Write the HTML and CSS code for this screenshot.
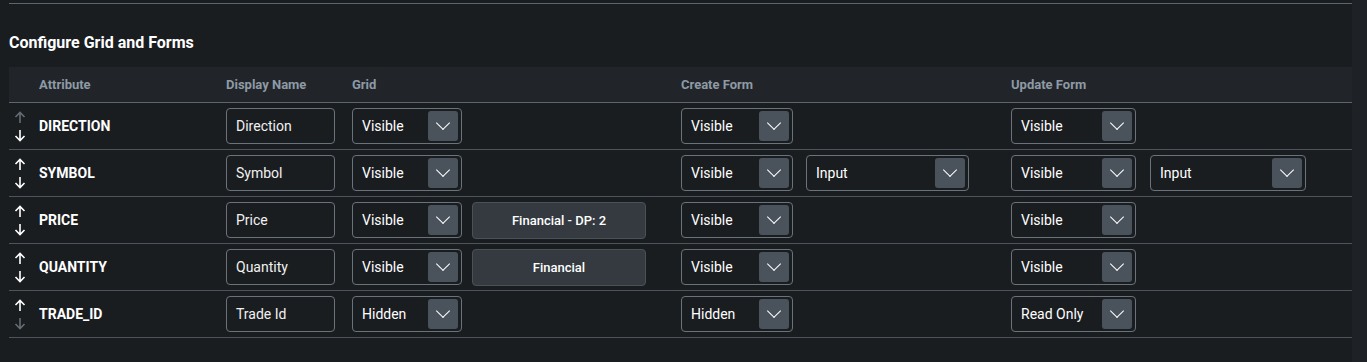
FILE: index.html
```html
<!DOCTYPE html>
<html>
<head>
    <meta charset="UTF-8">
    <title>Configure Grid and Forms</title>
    <link rel="stylesheet" href="styles.css">
</head>
<body>
<div class="page">
    <div class="content">
        <hr class="top-rule">
        <h3 class="title">Configure Grid and Forms</h3>

        <div class="table">
            <div class="row head">
                <div></div>
                <div>Attribute</div>
                <div>Display Name</div>
                <div>Grid</div>
                <div>Create Form</div>
                <div>Update Form</div>
            </div>

            <div class="row">
                <div class="move">
                    <svg class="arrow off" viewBox="0 0 12 13"><path d="M6 12V1.5M1.5 6L6 1.5 10.5 6"/></svg>
                    <svg class="arrow" viewBox="0 0 12 13"><path d="M6 1v10.5M1.5 7L6 11.5 10.5 7"/></svg>
                </div>
                <div class="attr">DIRECTION</div>
                <div><div class="text-input">Direction</div></div>
                <div class="cell"><div class="select w-grid"><span>Visible</span><i class="caret"></i></div></div>
                <div class="cell"><div class="select w-create"><span>Visible</span><i class="caret"></i></div></div>
                <div class="cell"><div class="select w-update"><span>Visible</span><i class="caret"></i></div></div>
            </div>

            <div class="row">
                <div class="move">
                    <svg class="arrow" viewBox="0 0 12 13"><path d="M6 12V1.5M1.5 6L6 1.5 10.5 6"/></svg>
                    <svg class="arrow" viewBox="0 0 12 13"><path d="M6 1v10.5M1.5 7L6 11.5 10.5 7"/></svg>
                </div>
                <div class="attr">SYMBOL</div>
                <div><div class="text-input">Symbol</div></div>
                <div class="cell"><div class="select w-grid"><span>Visible</span><i class="caret"></i></div></div>
                <div class="cell gap-create">
                    <div class="select w-create"><span>Visible</span><i class="caret"></i></div>
                    <div class="select w-type"><span>Input</span><i class="caret"></i></div>
                </div>
                <div class="cell gap-update">
                    <div class="select w-update"><span>Visible</span><i class="caret"></i></div>
                    <div class="select w-type2"><span>Input</span><i class="caret"></i></div>
                </div>
            </div>

            <div class="row">
                <div class="move">
                    <svg class="arrow" viewBox="0 0 12 13"><path d="M6 12V1.5M1.5 6L6 1.5 10.5 6"/></svg>
                    <svg class="arrow" viewBox="0 0 12 13"><path d="M6 1v10.5M1.5 7L6 11.5 10.5 7"/></svg>
                </div>
                <div class="attr">PRICE</div>
                <div><div class="text-input">Price</div></div>
                <div class="cell gap-grid">
                    <div class="select w-grid"><span>Visible</span><i class="caret"></i></div>
                    <button class="format">Financial - DP: 2</button>
                </div>
                <div class="cell"><div class="select w-create"><span>Visible</span><i class="caret"></i></div></div>
                <div class="cell"><div class="select w-update"><span>Visible</span><i class="caret"></i></div></div>
            </div>

            <div class="row">
                <div class="move">
                    <svg class="arrow" viewBox="0 0 12 13"><path d="M6 12V1.5M1.5 6L6 1.5 10.5 6"/></svg>
                    <svg class="arrow" viewBox="0 0 12 13"><path d="M6 1v10.5M1.5 7L6 11.5 10.5 7"/></svg>
                </div>
                <div class="attr">QUANTITY</div>
                <div><div class="text-input">Quantity</div></div>
                <div class="cell gap-grid">
                    <div class="select w-grid"><span>Visible</span><i class="caret"></i></div>
                    <button class="format">Financial</button>
                </div>
                <div class="cell"><div class="select w-create"><span>Visible</span><i class="caret"></i></div></div>
                <div class="cell"><div class="select w-update"><span>Visible</span><i class="caret"></i></div></div>
            </div>

            <div class="row">
                <div class="move">
                    <svg class="arrow" viewBox="0 0 12 13"><path d="M6 12V1.5M1.5 6L6 1.5 10.5 6"/></svg>
                    <svg class="arrow off" viewBox="0 0 12 13"><path d="M6 1v10.5M1.5 7L6 11.5 10.5 7"/></svg>
                </div>
                <div class="attr">TRADE_ID</div>
                <div><div class="text-input">Trade Id</div></div>
                <div class="cell"><div class="select w-grid"><span>Hidden</span><i class="caret"></i></div></div>
                <div class="cell"><div class="select w-create"><span>Hidden</span><i class="caret"></i></div></div>
                <div class="cell"><div class="select w-update"><span>Read Only</span><i class="caret"></i></div></div>
            </div>
        </div>
    </div>
    <div class="scroll-track"></div>
</div>
</body>
</html>
```

FILE: styles.css
```css
html, body {
    margin: 0;
    padding: 0;
    background-color: #1a1d20;
    color: #ffffff;
    font-family: Roboto, "Liberation Sans", Arial, sans-serif;
}

.page {
    display: flex;
    height: 362px;
}

.content {
    flex: 1;
    padding: 0 0 0 9px;
}

.scroll-track {
    width: 15px;
    background-color: #1e2125;
}

.top-rule {
    margin: 3px 0 0 0;
    border: none;
    border-top: 1px solid #5d666e;
    height: 0;
}

.title {
    margin: 28px 0 0 0;
    height: 22px;
    line-height: 22px;
    font-size: 16px;
    font-weight: 700;
}

.table {
    margin-top: 13px;
}

.row {
    display: grid;
    grid-template-columns: 30px 187px 126px 329px 330px 341px;
    align-items: center;
    height: 46px;
    border-bottom: 1px solid #4d545b;
}

.row.head {
    height: 35px;
    background-color: #212529;
    color: #8e9aa5;
    font-size: 13px;
    font-weight: 700;
    border-bottom-color: #5d666e;
}

.attr {
    font-size: 14px;
    font-weight: 700;
}

.move {
    display: flex;
    flex-direction: column;
    gap: 5px;
    padding-left: 5px;
}

.arrow {
    width: 12px;
    height: 13px;
    fill: none;
    stroke: #ffffff;
    stroke-width: 1.6;
}

.arrow.off {
    stroke: #656c73;
}

.text-input {
    box-sizing: border-box;
    width: 109px;
    height: 36px;
    padding: 0 9px;
    border: 1px solid #6a737b;
    border-radius: 4px;
    font-size: 14px;
    line-height: 34px;
    color: #f1f1f1;
}

.cell {
    display: flex;
    align-items: center;
}

.gap-grid { gap: 10px; }
.gap-create { gap: 13px; }
.gap-update { gap: 14px; }

.select {
    box-sizing: border-box;
    display: flex;
    align-items: center;
    justify-content: space-between;
    height: 36px;
    padding: 0 3px 0 9px;
    border: 1px solid #6a737b;
    border-radius: 4px;
    font-size: 14px;
    color: #ffffff;
}

.w-grid { width: 110px; }
.w-create { width: 112px; }
.w-update { width: 125px; }
.w-type { width: 163px; }
.w-type2 { width: 156px; }

.caret {
    width: 30px;
    height: 30px;
    border-radius: 3px;
    background-color: #4a535b;
    position: relative;
}

.caret::after {
    content: "";
    position: absolute;
    left: 10px;
    top: 7px;
    width: 9px;
    height: 9px;
    border-right: 1px solid #ffffff;
    border-bottom: 1px solid #ffffff;
    transform: rotate(45deg);
}

.format {
    box-sizing: border-box;
    width: 174px;
    height: 37px;
    border: 1px solid #4a5157;
    border-radius: 4px;
    background-color: #343a40;
    color: #ffffff;
    font-family: Roboto, "Liberation Sans", Arial, sans-serif;
    font-size: 13px;
    font-weight: 500;
}
```
